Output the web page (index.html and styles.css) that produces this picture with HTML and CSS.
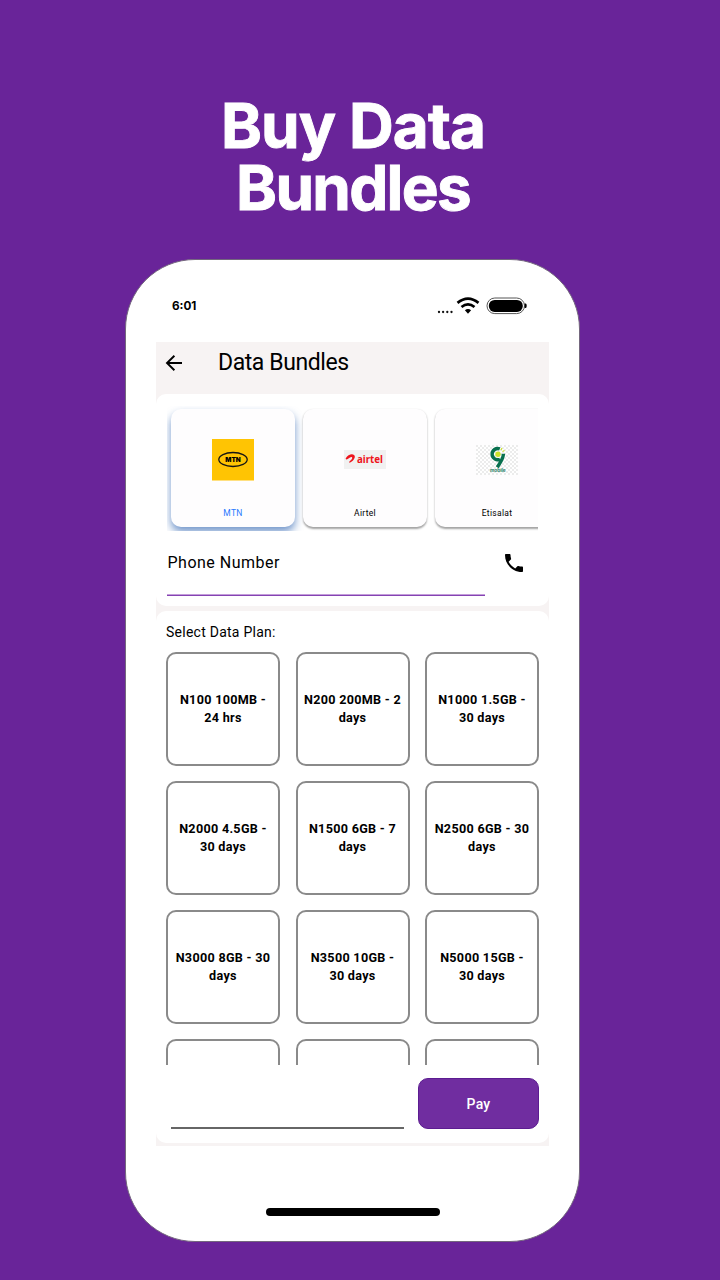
FILE: index.html
```html
<!DOCTYPE html>
<html lang="en">
<head>
<meta charset="utf-8">
<title>Buy Data Bundles</title>
<link rel="stylesheet" href="styles.css">
</head>
<body>
<h1 class="headline"><span class="line-one">Buy Data</span><span class="line-two">Bundles</span></h1>
<main class="phone">
  <div class="status">
    <span class="time">6:01</span>
    <svg class="status-icons" width="92" height="20" viewBox="0 0 92 20">
      <g fill="#111"><circle cx="4" cy="15" r="1.15"/><circle cx="8.1" cy="15" r="1.15"/><circle cx="12.3" cy="15" r="1.15"/><circle cx="16.5" cy="15" r="1.15"/></g>
      <g fill="none" stroke="#000" stroke-width="2.7"><path d="M22.5 5.9Q33 -2.5 43.5 5.9"/><path d="M26.5 10Q33 4.6 39.5 10"/></g>
      <path d="M29.9 13.2Q33 10.8 36.1 13.2L33 16.8Z"/>
      <rect x="52" y="1" width="37.5" height="15.6" rx="7.8" fill="#fff" stroke="#555" stroke-width="1"/>
      <rect x="53.8" y="2.9" width="34" height="12" rx="5.8"/>
      <path d="M89.6 6.5h1q1.1 0 1.1 2.2t-1.1 2.2h-1z"/>
    </svg>
  </div>
  <div class="app">
    <header class="appbar">
      <svg class="back" width="18" height="18" viewBox="0 0 18 18" fill="none" stroke="#000" stroke-width="1.9"><path d="M17 9H2.400M9.400 1.700L2 9L9.400 16.300"/></svg>
      <h2 class="title">Data Bundles</h2>
    </header>
    <section class="panel order">
      <div class="providers">
        <div class="provider selected">
          <div class="logo"><svg width="42" height="42" viewBox="0 0 42 42"><rect width="42" height="41.500" fill="#ffc403"/><ellipse cx="21" cy="20.5" rx="14.2" ry="7" fill="none" stroke="#151515" stroke-width="1.3"/><text class="mtn-word" x="21" y="22.7" text-anchor="middle" textLength="15.5" lengthAdjust="spacingAndGlyphs">MTN</text></svg></div>
          <span class="name">MTN</span>
        </div>
        <div class="provider">
          <div class="logo"><svg width="42" height="20" viewBox="0 0 42 20"><rect width="42" height="19" fill="#f1f1f1"/><path d="M1.8 8.3C3.8 4.8 7.8 3.4 10 4.9C12.3 6.8 9.5 10.6 6.2 12.6C4.8 13 4.9 11.8 6 11C7.9 9.6 9 7.7 7.7 7.1C6 6.500 4.2 9.4 2.6 9.5C1.8 9.5 1.5 9 1.8 8.3Z" fill="#ee141c"/><text class="airtel-word" x="13" y="12.7" textLength="26" lengthAdjust="spacingAndGlyphs">airtel</text></svg></div>
          <span class="name">Airtel</span>
        </div>
        <div class="provider">
          <div class="logo"><svg width="42" height="30" viewBox="0 0 42 30"><defs><pattern id="check" width="4" height="4" patternUnits="userSpaceOnUse"><rect width="4" height="4" fill="#fff"/><path d="M0 0h2v2H0zM2 2h2v2H2z" fill="#ececec"/></pattern></defs><rect width="42" height="30" fill="url(#check)"/><path d="M23.8 3.9A5.6 5.6 0 1 0 24 14.2M27.4 8.8C27.4 14 25 16.5 21.2 22.2" fill="none" stroke="#08704f" stroke-width="3.4"/><circle cx="22" cy="9.2" r="2.7" fill="#cbe32b"/><path d="M25 5l1-2M26.5 6.5l2-1" stroke="#cbe32b" stroke-width="1.2"/><text class="mobile-word" x="14" y="27.2" textLength="15.5" lengthAdjust="spacingAndGlyphs">mobile</text></svg></div>
          <span class="name">Etisalat</span>
        </div>
      </div>
      <div class="phone-row">
        <div class="phone-field">Phone Number</div>
        <svg class="call" width="24" height="24" viewBox="0 0 24 24"><path d="M6.62 10.79c1.44 2.83 3.76 5.14 6.59 6.59l2.2-2.2c.27-.27.67-.36 1.02-.24 1.12.37 2.33.57 3.57.57.55 0 1 .45 1 1V20c0 .55-.45 1-1 1C10.61 21 3 13.39 3 4c0-.55.45-1 1-1h3.5c.55 0 1 .45 1 1 0 1.25.2 2.45.57 3.57.11.35.03.74-.25 1.02z"/></svg>
      </div>
    </section>
    <section class="panel plans">
      <h3 class="plans-title">Select Data Plan:</h3>
      <div class="grid">
        <div class="plan">N100 100MB -<br>24 hrs</div>
        <div class="plan">N200 200MB - 2<br>days</div>
        <div class="plan">N1000 1.5GB -<br>30 days</div>
        <div class="plan">N2000 4.5GB -<br>30 days</div>
        <div class="plan">N1500 6GB - 7<br>days</div>
        <div class="plan">N2500 6GB - 30<br>days</div>
        <div class="plan">N3000 8GB - 30<br>days</div>
        <div class="plan">N3500 10GB -<br>30 days</div>
        <div class="plan">N5000 15GB -<br>30 days</div>
        <div class="plan"></div>
        <div class="plan"></div>
        <div class="plan"></div>
      </div>
      <div class="checkout">
        <div class="amount"></div>
        <button class="pay">Pay</button>
      </div>
    </section>
  </div>
  <div class="home"></div>
</main>
</body>
</html>
```
FILE: styles.css
```css
* { box-sizing: border-box; }
body {
  margin: 0;
  height: 1280px;
  overflow: hidden;
  background: #692499;
  font-family: Roboto, sans-serif;
  color: #000;
  display: flex;
  flex-direction: column;
}
.headline {
  margin: 0;
  padding: 95px 14px 0 0;
  height: 259px;
  font: 700 62px/62px Inter, sans-serif;
  color: #fff;
  -webkit-text-stroke: .9px #fff;
  display: flex;
  flex-direction: column;
  align-items: center;
}
.line-one { letter-spacing: -.9px; }
.line-two { letter-spacing: -1.7px; }
.phone {
  width: 455px;
  height: 983px;
  margin-left: 125px;
  border: 1px solid #74677e;
  border-radius: 70px;
  background: #fff;
  padding: 0 30px;
  display: flex;
  flex-direction: column;
}
.status {
  height: 82px;
  padding: 37px 22px 0 16px;
  display: flex;
  justify-content: space-between;
}
.time { margin-top: -1px; font: 700 11.7px/20px Inter, sans-serif; }
.app {
  width: 393px;
  height: 804px;
  background: #f7f3f3;
  display: flex;
  flex-direction: column;
}
.appbar {
  height: 52px;
  padding: 5px 9px;
  display: flex;
  align-items: flex-start;
}
.back { margin-top: 7px; }
.title {
  margin: 0 0 0 35px;
  font-weight: 400;
  font-size: 23px;
  line-height: 32px;
  letter-spacing: -.42px;
}
.panel {
  background: #fff;
  border-radius: 10px;
}
.order { height: 212px; padding: 12px 11px 0; }
.providers {
  height: 125px;
  padding: 3px 4px 0;
  display: flex;
  gap: 8px;
  overflow: hidden;
}
.provider {
  flex: 0 0 124px;
  height: 118px;
  border-radius: 10px;
  background: #fefdfe;
  box-shadow: 0 1.5px 2px rgba(0,0,0,.36);
  display: flex;
  flex-direction: column;
  align-items: center;
}
.selected { box-shadow: 0 5px 9px rgba(40,95,175,.65); }
.logo {
  height: 96px;
  padding-top: 6px;
  display: flex;
  align-items: center;
}
.name { font-size: 8.5px; line-height: 17px; letter-spacing: .3px; }
.selected .name { color: #2979ff; }
.mtn-word { font: 900 6px Inter, sans-serif; }
.airtel-word { font: 700 11px "Noto Sans", sans-serif; fill: #ee141c; }
.mobile-word { font: 700 4.2px Inter, sans-serif; fill: #287f68; }
.phone-row {
  display: flex;
  justify-content: space-between;
  padding-right: 12px;
}
.phone-field {
  width: 318px;
  height: 65px;
  padding: 20px 0 0 .5px;
  background: linear-gradient(#c39dda 50%, #8543b2 50%) 0 100% / 100% 2px no-repeat;
  font-size: 16px;
  line-height: 24px;
  letter-spacing: .5px;
}
.call { margin-top: 20px; }
.plans { height: 532px; margin-top: 5px; padding: 11px 10px 0; }
.plans-title { margin: 0; font-weight: 400; font-size: 14px; line-height: 20px; letter-spacing: .25px; }
.grid {
  width: 373px;
  height: 414px;
  margin-top: 9px;
  padding-top: 1px;
  display: grid;
  grid-template-columns: repeat(3, 114px);
  grid-auto-rows: 114px;
  justify-content: space-between;
  row-gap: 15px;
  overflow: hidden;
}
.plan {
  border: 2px solid #8a8a8a;
  border-radius: 10px;
  display: flex;
  align-items: center;
  justify-content: center;
  text-align: center;
  font-weight: 700;
  font-size: 12.6px;
  line-height: 18px;
  letter-spacing: .3px;
}
.checkout {
  display: flex;
  justify-content: space-between;
  padding: 13px 0 0 5px;
}
.amount {
  width: 233px;
  height: 51px;
  background: linear-gradient(#666, #666) 0 100% / 100% 2px no-repeat;
}
.pay {
  width: 121px;
  height: 51px;
  padding: 0;
  border: 1.5px solid #5c1c91;
  border-radius: 10px;
  background: #702da0;
  color: #fff;
  font: 500 14px Roboto, sans-serif;
  letter-spacing: .2px;
}
.home {
  width: 174px;
  height: 8px;
  margin: 62px 0 0 109.5px;
  border-radius: 4px;
  background: #000;
}
```
